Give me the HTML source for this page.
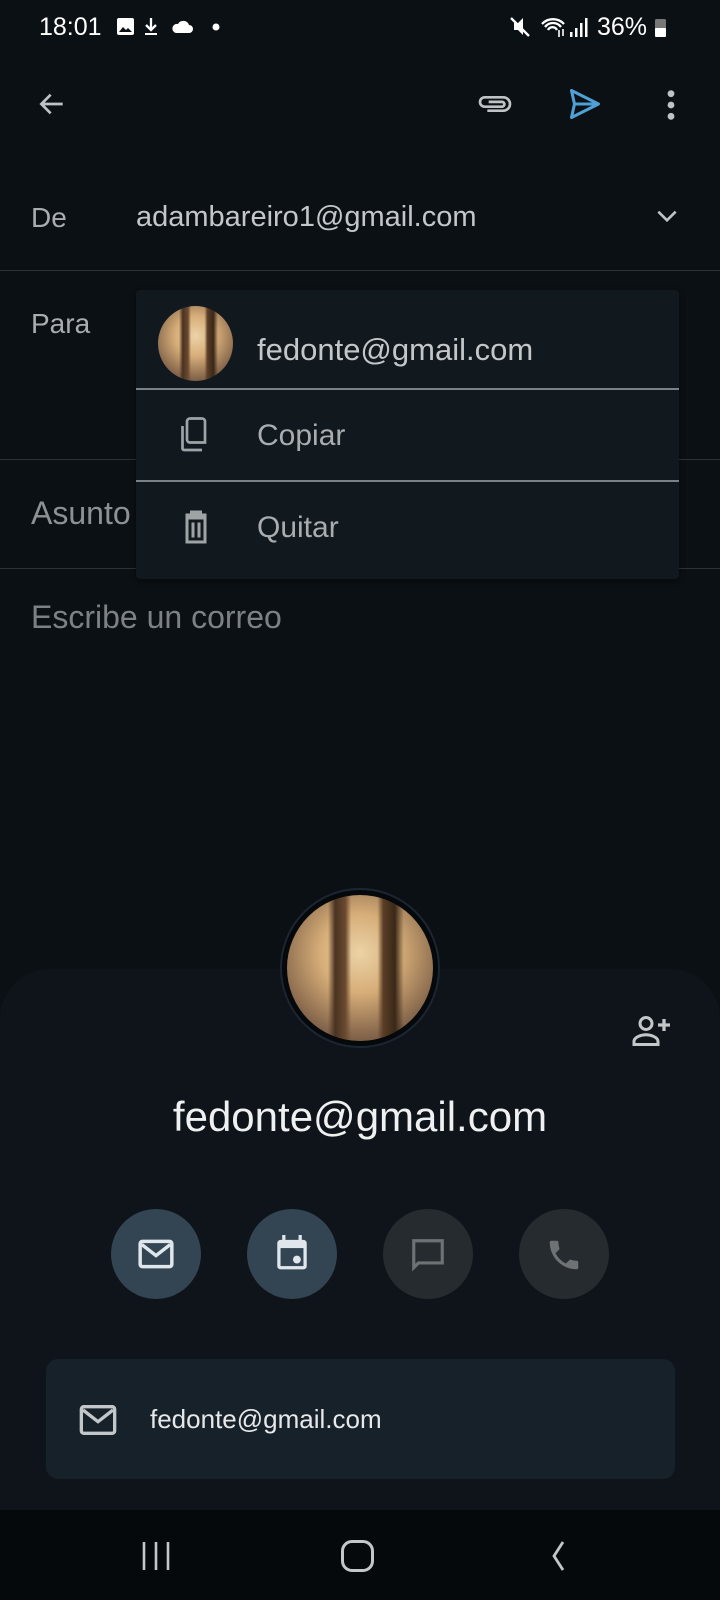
<!DOCTYPE html>
<html><head><meta charset="utf-8"><style>
*{margin:0;padding:0;box-sizing:border-box}
body{width:720px;height:1600px;background:#0b1015;position:relative;overflow:hidden;font-family:"Liberation Sans",sans-serif;color:#c4c7c9}
.a{position:absolute}
.t{position:absolute;white-space:nowrap;line-height:1}
.hr{position:absolute;left:0;width:720px;height:1px;background:#2c3338}
.av{border-radius:50%;background:linear-gradient(90deg,transparent 0,transparent 28%,#4a3322 33%,#6a4a30 40%,transparent 44%,transparent 62%,#5a3d26 66%,#3a2818 74%,transparent 80%),radial-gradient(circle at 50% 40%,#ecd3a6 0,#d6ad78 35%,#8a6a4e 70%,#4a3a2e 100%);overflow:hidden}
</style></head><body>
<!-- status bar -->
<div class="t" style="left:39px;top:15px;font-size:25px;color:#fff">18:01</div>
<svg class="a" style="left:115px;top:16px" width="110" height="22" viewBox="0 0 110 22" fill="#fff">
<rect x="2" y="2" width="17" height="17" rx="2"/><path d="M4 16l4-5 3 3 2-2 4 4z" fill="#0b1015"/>
<path d="M36 2v11M31 9l5 5 5-5" stroke="#fff" stroke-width="2.3" fill="none"/><rect x="30" y="17" width="12" height="2"/>
<path d="M61 17h13a4 4 0 0 0 0-8 6 6 0 0 0-11-1 4.5 4.5 0 0 0-2 9z"/>
<circle cx="101" cy="11" r="3.5"/></svg>
<svg class="a" style="left:508px;top:14px" width="162" height="26" viewBox="0 0 162 26" fill="#fff">
<path d="M6 9h4l5-5v17l-5-5H6z"/><path d="M3 4l18 18" stroke="#fff" stroke-width="2.3"/>
<path d="M34 10a15 15 0 0 1 22 0M37 13a10 10 0 0 1 16 0M40 16a5 5 0 0 1 9 0" stroke="#fff" stroke-width="2.3" fill="none"/><path d="M51 16v7M55 15v7" stroke="#fff" stroke-width="1.6"/>
<rect x="62" y="18" width="2.5" height="5"/><rect x="67" y="14" width="2.5" height="9"/><rect x="72" y="9" width="2.5" height="14"/><rect x="77" y="4" width="2.5" height="19"/>
<rect x="147" y="5" width="11" height="18" rx="1.5" fill="#777"/><rect x="147" y="14" width="11" height="9" rx="1"/></svg>
<div class="t" style="left:597px;top:15px;font-size:25px;color:#fff">36%</div>
<!-- toolbar -->
<svg class="a" style="left:36px;top:88px" width="32" height="32" viewBox="0 0 24 24"><path d="M20 12H5M11 5l-7 7 7 7" stroke="#bfc3c6" stroke-width="2" fill="none"/></svg>
<svg class="a" style="left:474px;top:88px" width="40" height="32" viewBox="0 0 30 24"><path d="M10 18h12a5 5 0 0 0 0-10H8a3.5 3.5 0 0 0 0 7h13a1.8 1.8 0 0 0 0-3.6H11" stroke="#bfc3c6" stroke-width="2" fill="none" transform="translate(0,-1)"/></svg>
<svg class="a" style="left:566px;top:86px" width="38" height="36" viewBox="0 0 24 24"><path d="M3 3l18 9-18 9 2-9zM5 12h16" stroke="#4ea0d6" stroke-width="2" fill="none" stroke-linejoin="round"/></svg>
<svg class="a" style="left:660px;top:88px" width="22" height="34" viewBox="0 0 10 24" fill="#bfc3c6"><circle cx="5" cy="4" r="2.4"/><circle cx="5" cy="12" r="2.4"/><circle cx="5" cy="20" r="2.4"/></svg>
<!-- fields -->
<div class="t" style="left:31px;top:204px;font-size:28px;color:#a9adb0">De</div>
<div class="t" style="left:136px;top:203px;font-size:29px;color:#c4c7c9">adambareiro1@gmail.com</div>
<svg class="a" style="left:654px;top:206px" width="26" height="20" viewBox="0 0 24 16"><path d="M4 4l8 8 8-8" stroke="#bfc3c6" stroke-width="2.4" fill="none"/></svg>
<div class="hr" style="top:270px"></div>
<div class="t" style="left:31px;top:310px;font-size:28px;color:#a9adb0">Para</div>
<div class="hr" style="top:459px"></div>
<div class="t" style="left:31px;top:497px;font-size:32px;color:#8d9194">Asunto</div>
<div class="hr" style="top:568px"></div>
<div class="t" style="left:31px;top:601px;font-size:32px;color:#7d8184">Escribe un correo</div>
<!-- popup -->
<div class="a" style="left:136px;top:290px;width:543px;height:289px;background:#11181e;border-radius:4px;box-shadow:0 2px 6px rgba(0,0,0,.5)"></div>
<div class="a av" style="left:158px;top:306px;width:75px;height:75px"></div>
<div class="t" style="left:257px;top:334px;font-size:31px;color:#c4c7c9">fedonte@gmail.com</div>
<div class="a" style="left:136px;top:388px;width:543px;height:2px;background:#7b8287"></div>
<svg class="a" style="left:178px;top:417px" width="36" height="36" viewBox="0 0 24 24"><path d="M16 1H8a2 2 0 0 0-2 2v12a2 2 0 0 0 2 2h10V3a2 2 0 0 0-2-2z" stroke="#9ea3a6" stroke-width="1.8" fill="none"/><path d="M3 6v15a1 1 0 0 0 1 1h12" stroke="#9ea3a6" stroke-width="1.8" fill="none"/></svg>
<div class="t" style="left:257px;top:421px;font-size:30px;color:#a9adb0">Copiar</div>
<div class="a" style="left:136px;top:480px;width:543px;height:2px;background:#7b8287"></div>
<svg class="a" style="left:178px;top:509px" width="36" height="36" viewBox="0 0 24 24"><path d="M5 4h14M9 4V2h6v2M6 6h12v16H6z M10 9v10M14 9v10" stroke="#9ea3a6" stroke-width="2" fill="none"/></svg>
<div class="t" style="left:257px;top:513px;font-size:30px;color:#a9adb0">Quitar</div>
<!-- bottom sheet -->
<div class="a" style="left:0;top:969px;width:720px;height:560px;background:#0e141a;border-radius:50px 50px 0 0"></div>
<div class="a" style="left:280px;top:888px;width:160px;height:160px;border-radius:50%;background:#05090c;border:2px solid #1c2530"></div>
<div class="a av" style="left:287px;top:895px;width:146px;height:146px"></div>
<svg class="a" style="left:630px;top:1013px" width="44" height="36" viewBox="0 0 28 24"><circle cx="10" cy="7" r="4" stroke="#c4c7c9" stroke-width="2" fill="none"/><path d="M2 21v-2c0-3 5-4.5 8-4.5s8 1.5 8 4.5v2z" stroke="#c4c7c9" stroke-width="2" fill="none"/><path d="M22 4v8M18 8h8" stroke="#c4c7c9" stroke-width="2.2"/></svg>
<div class="t" style="left:0;width:720px;text-align:center;top:1096px;font-size:42px;color:#eef0f1">fedonte@gmail.com</div>
<div class="a" style="left:111px;top:1209px;width:90px;height:90px;border-radius:50%;background:#334453"></div>
<div class="a" style="left:247px;top:1209px;width:90px;height:90px;border-radius:50%;background:#334453"></div>
<div class="a" style="left:383px;top:1209px;width:90px;height:90px;border-radius:50%;background:#262b2f"></div>
<div class="a" style="left:519px;top:1209px;width:90px;height:90px;border-radius:50%;background:#262b2f"></div>
<svg class="a" style="left:137px;top:1236px" width="38" height="36" viewBox="0 0 24 22"><rect x="2" y="3" width="20" height="16" rx="1.5" stroke="#dfe6ec" stroke-width="2.2" fill="none"/><path d="M3 5l9 7 9-7" stroke="#dfe6ec" stroke-width="2.2" fill="none"/></svg>
<svg class="a" style="left:274px;top:1233px" width="36" height="40" viewBox="0 0 22 24"><path d="M6 1v4M16 1v4" stroke="#dfe6ec" stroke-width="2"/><rect x="2" y="4" width="18" height="18" rx="2" fill="#dfe6ec"/><rect x="4" y="9" width="14" height="11" fill="#334453"/><circle cx="14" cy="16" r="2.4" fill="#dfe6ec"/></svg>
<svg class="a" style="left:408px;top:1236px" width="40" height="38" viewBox="0 0 24 24"><path d="M3 3h18v14H6l-3 3z" stroke="#6e7275" stroke-width="2" fill="none"/></svg>
<svg class="a" style="left:545px;top:1236px" width="38" height="38" viewBox="0 0 24 24"><path d="M6.6 10.8a15 15 0 0 0 6.6 6.6l2.2-2.2c.3-.3.7-.4 1-.2 1.1.4 2.3.6 3.6.6.6 0 1 .4 1 1V20c0 .6-.4 1-1 1A17 17 0 0 1 3 4c0-.6.4-1 1-1h3.5c.6 0 1 .4 1 1 0 1.3.2 2.5.6 3.6.1.3 0 .7-.2 1z" fill="#6e7275"/></svg>
<!-- card -->
<div class="a" style="left:46px;top:1359px;width:629px;height:120px;background:#17212a;border-radius:12px"></div>
<svg class="a" style="left:78px;top:1403px" width="40" height="34" viewBox="0 0 24 20"><rect x="2" y="2" width="20" height="16" rx="1.5" stroke="#c4c7c9" stroke-width="2" fill="none"/><path d="M3 4l9 7 9-7" stroke="#c4c7c9" stroke-width="2" fill="none"/></svg>
<div class="t" style="left:150px;top:1406px;font-size:26px;color:#e6e8e9">fedonte@gmail.com</div>
<!-- nav bar -->
<div class="a" style="left:0;top:1510px;width:720px;height:90px;background:#05090c"></div>
<svg class="a" style="left:138px;top:1538px" width="36" height="36" viewBox="0 0 36 36"><path d="M6 4v28M18 4v28M30 4v28" stroke="#c4c7c9" stroke-width="2.6"/></svg>
<div class="a" style="left:341px;top:1540px;width:33px;height:32px;border:3px solid #c4c7c9;border-radius:11px"></div>
<svg class="a" style="left:545px;top:1538px" width="28" height="36" viewBox="0 0 20 36"><path d="M14 4L5 18l9 14" stroke="#c4c7c9" stroke-width="2.8" fill="none"/></svg>
</body></html>
